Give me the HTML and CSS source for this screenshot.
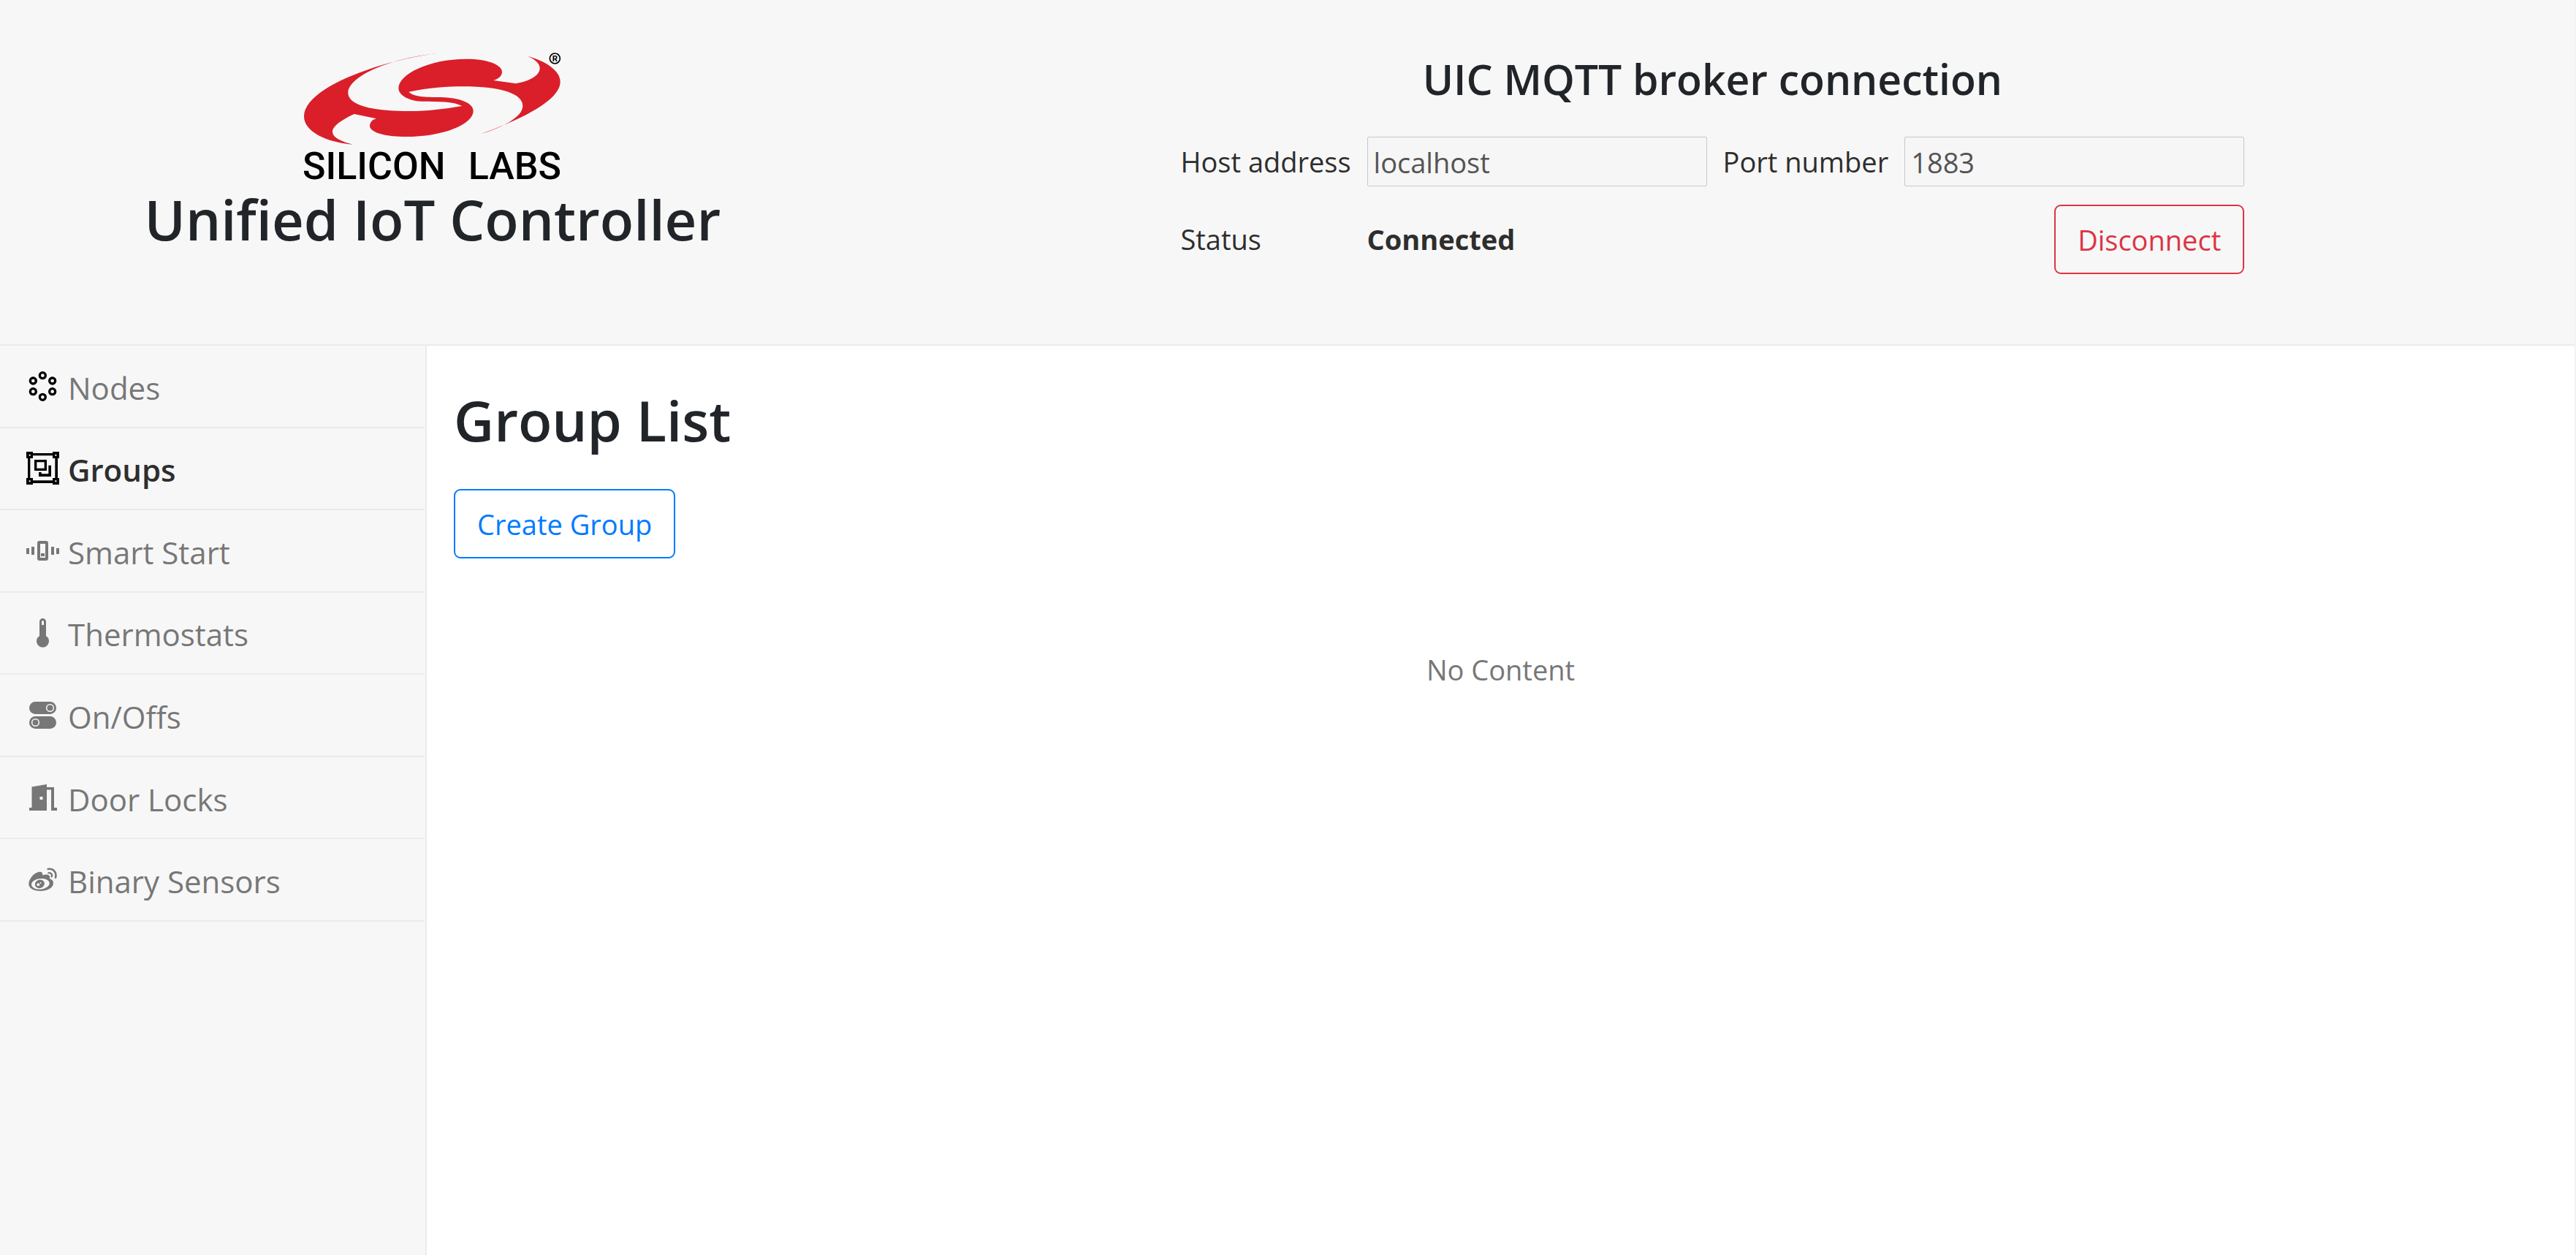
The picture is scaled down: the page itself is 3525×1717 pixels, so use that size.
FILE: index.html
```
<!DOCTYPE html>
<html lang="en">
<head>
<meta charset="utf-8">
<meta name="viewport" content="width=device-width, initial-scale=1">
<title>Unified IoT Controller</title>
<link rel="stylesheet" href="styles.css">
</head>
<body>
<header class="top">
  <div class="brand">
    <svg class="logo" viewBox="48 36 1056 540" role="img" aria-label="Silicon Labs">
      <path fill="#da1f2a" d="M603 38C400 60 48 170 48 298C48 360 140 405 248 413C200 400 165 385 165 360C165 335 215 305 255 288L345 307C325 312 318 325 318 337C318 360 370 381 465 381C620 381 743 330 743 275C743 240 680 221 610 219C540 218 500 218 478 197C560 180 640 175 700 175C860 175 946 205 946 255C946 300 860 345 775 369C900 325 1100 240 1100 156C1100 110 1040 70 966 50C1000 65 1016 82 1016 100C1016 130 975 153 918 163L826 150C850 143 861 130 861 115C861 85 800 62 715 62C560 62 436 125 436 182C436 210 480 235 530 236C600 237 660 235 697 255C620 268 560 276 480 276C320 276 229 250 229 200C229 140 380 60 603 38Z"/>
      <circle class="mark-ring" cx="1078" cy="60" r="21"/>
      <text class="mark-letter" x="1078" y="72">R</text>
      <text class="logo-name" x="42" y="556">SILICON</text>
      <text class="logo-name logo-name-end" x="1104" y="556">LABS</text>
    </svg>
    <h1 class="brand-title">Unified IoT Controller</h1>
  </div>
  <section class="broker">
    <h2 class="broker-title">UIC MQTT broker connection</h2>
    <form class="broker-form">
      <label for="host">Host address</label>
      <input class="field" id="host" type="text" value="localhost" disabled>
      <label for="port">Port number</label>
      <input class="field" id="port" type="text" value="1883" disabled>
      <span>Status</span>
      <b>Connected</b>
      <button class="btn btn-danger" type="button">Disconnect</button>
    </form>
  </section>
</header>
<div class="layout">
  <aside class="side">
    <nav class="menu">
      <a class="item" href="#nodes">
        <svg class="icon icon-dark" viewBox="0 0 135 135"><g fill="none" stroke="currentColor" stroke-width="10"><circle cx="67" cy="23" r="12"/><circle cx="28" cy="45" r="12"/><circle cx="107" cy="45" r="12"/><circle cx="28" cy="89" r="12"/><circle cx="107" cy="89" r="12"/><circle cx="67" cy="112" r="12"/></g></svg>
        <span class="label">Nodes</span>
      </a>
      <a class="item active" href="#groups" aria-current="page">
        <svg class="icon icon-dark" viewBox="0 0 135 135"><path fill="currentColor" fill-rule="evenodd" d="M0 0H27V6H108V0H135V27H129V108H135V135H108V129H27V135H0V108H6V27H0ZM27 16V27H16V108H27V118H108V108H118V27H108V16ZM11 11V17H17V11ZM118 11V17H124V11ZM11 118V124H17V118ZM118 118V124H124V118ZM33 33H84V78H33ZM43 43V68H74V43ZM91 56H102V102H51V84H62V91H91Z"/></svg>
        <span class="label">Groups</span>
      </a>
      <a class="item" href="#smart-start">
        <svg class="icon" viewBox="0 0 45 45"><rect x="17" y="11" width="11" height="23" rx="1" fill="none" stroke="currentColor" stroke-width="4"/><path fill="currentColor" d="M20 26h5v4h-5zM0 19h4v8H0zM7 17h4v11H7zM34 17h4v11h-4zM41 19h4v8h-4z"/></svg>
        <span class="label">Smart Start</span>
      </a>
      <a class="item" href="#thermostats">
        <svg class="icon" viewBox="0 0 45 45"><path fill="currentColor" fill-rule="evenodd" d="M18 7.500a4.500 4.500 0 0 1 9 0V27a8.500 8.500 0 1 1-9 0ZM21 7.500V12h3V7.500a1.500 1.500 0 0 0-3 0Z"/></svg>
        <span class="label">Thermostats</span>
      </a>
      <a class="item" href="#on-offs">
        <svg class="icon" viewBox="0 0 45 45"><g fill="currentColor"><rect x="4" y="4" width="37" height="17" rx="8.500"/><rect x="4" y="24" width="37" height="17" rx="8.500"/></g><g fill="none" stroke="#f7f7f7" stroke-width="1.500"><circle cx="32.500" cy="12.500" r="4.800"/><circle cx="12.500" cy="32.500" r="4.800"/></g></svg>
        <span class="label">On/Offs</span>
      </a>
      <a class="item" href="#door-locks">
        <svg class="icon" viewBox="0 0 45 45"><path fill="currentColor" fill-rule="evenodd" d="M7.500 7.500L28 4V8H38V36H42V40H34V11.500H28V40H4V36H7.500ZM18.500 21V25H22.500V21Z"/></svg>
        <span class="label">Door Locks</span>
      </a>
      <a class="item" href="#binary-sensors">
        <svg class="icon" viewBox="18 15 135 135"><path fill="currentColor" d="M28 100C28 80 50 52 72 50C82 49 86 55 84 64C95 60 108 60 113 66C116 71 113 76 115 79C124 82 129 88 129 96C129 116 105 129 75 129C48 129 28 118 28 100Z"/><ellipse cx="76" cy="100" rx="37" ry="22" fill="#f7f7f7" transform="rotate(-6 76 100)"/><ellipse cx="73" cy="100" rx="20" ry="17" fill="currentColor" transform="rotate(-20 73 100)"/><circle cx="67" cy="103" r="6" fill="#f7f7f7"/><circle cx="77" cy="96" r="3" fill="#f7f7f7"/><g fill="none" stroke="currentColor" stroke-linecap="round"><path stroke-width="8" d="M107 39C128 35 144 52 138 74"/><path stroke-width="7" d="M109 55C118 53 126 60 122 70"/></g></svg>
        <span class="label">Binary Sensors</span>
      </a>
    </nav>
  </aside>
  <main class="content">
    <h2 class="page-title">Group List</h2>
    <button class="btn btn-primary" type="button">Create Group</button>
    <p class="empty">No Content</p>
  </main>
</div>
</body>
</html>
```
FILE: styles.css
```
* {
  box-sizing: border-box;
}

body {
  margin: 0;
  min-height: 100vh;
  display: flex;
  flex-direction: column;
  border-right: 2px solid #f3f3f3;
  background: #fff;
  color: #2e2e2e;
  font: 400 38px/51px "Open Sans", "Noto Sans", sans-serif;
}

h1,
h2,
p {
  margin: 0;
}

/* Header */
.top {
  display: grid;
  grid-template-columns: 1fr 2fr;
  padding: 72px 12px 96px 8px;
  background: #f7f7f7;
  border-bottom: 2px solid #ebebeb;
}

.brand {
  display: flex;
  flex-direction: column;
  align-items: center;
}

.logo {
  width: 352px;
  height: 180px;
  overflow: visible;
}

.logo-name {
  font: 500 156px Roboto, sans-serif;
}

.logo-name-end {
  text-anchor: end;
}

.mark-ring {
  fill: none;
  stroke: #000;
  stroke-width: 5;
}

.mark-letter {
  font: 700 34px Roboto, sans-serif;
  text-anchor: middle;
}

.brand-title,
.page-title {
  color: #212529;
  font-size: 76px;
  font-weight: 600;
  line-height: 96px;
}

.broker {
  display: flex;
  flex-direction: column;
  align-items: center;
  gap: 42px;
}

.broker-title {
  color: #212529;
  font-size: 57px;
  font-weight: 600;
  line-height: 73px;
}

.broker-form {
  display: grid;
  grid-template-columns: auto 465px auto 465px;
  align-items: center;
  gap: 25px 22px;
}

.field {
  width: 100%;
  height: 68px;
  padding: 2px 8px 0;
  border: 1px solid #c8c8c8;
  border-radius: 2px;
  background: #f6f6f6;
  color: #545454;
  font: inherit;
}

.btn {
  padding: 21px 30px 19px;
  border: 2px solid;
  border-radius: 9px;
  background: transparent;
  font: inherit;
}

.btn-danger {
  grid-column: 4;
  justify-self: end;
  color: #dc3545;
}

.btn-primary {
  color: #007bff;
}

/* Sidebar */
.layout {
  flex: 1;
  display: flex;
}

.side {
  flex: 0 0 584px;
  padding-right: 1px;
  background: #f7f7f7;
  border-right: 2px solid #ebebeb;
}

.menu {
  display: grid;
  grid-auto-rows: 1fr;
  min-height: 788px;
}

.item {
  display: flex;
  align-items: center;
  gap: 12px;
  padding-left: 36px;
  border-bottom: 2px solid #ebebeb;
  color: #777;
  font-size: 42px;
  text-decoration: none;
}

.active {
  color: #2e2e2e;
  font-weight: 600;
}

.icon {
  flex: none;
  width: 45px;
  height: 45px;
}

.icon-dark {
  color: #000;
}

.label {
  padding-top: 4px;
}

/* Main area */
.content {
  flex: 1;
  padding: 54px 37px;
}

.page-title {
  margin-bottom: 46px;
}

.empty {
  margin-top: 127px;
  color: #777;
  text-align: center;
}
```
